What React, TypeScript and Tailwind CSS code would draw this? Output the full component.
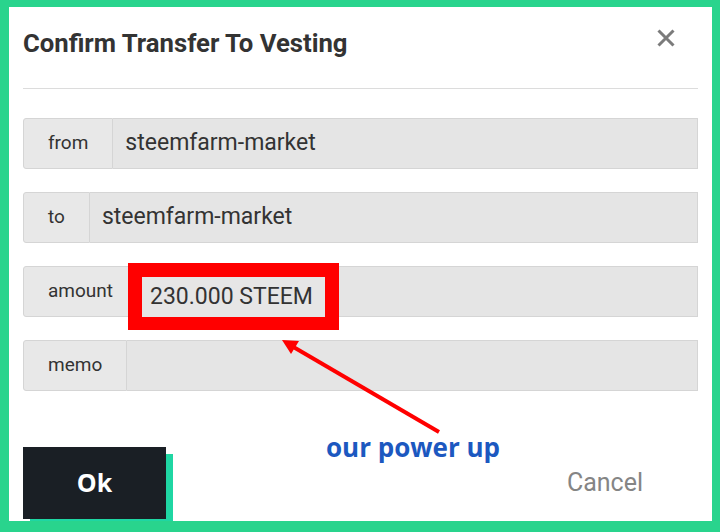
const ROWS = [
  { label: "from", value: "steemfarm-market" },
  { label: "to", value: "steemfarm-market" },
  { label: "amount", value: "230.000 STEEM", marked: true },
  { label: "memo", value: "" },
];

function Field({ label, value, marked }: { label: string; value: string; marked?: boolean }) {
  return (
    <div className="flex h-[51px] text-[#333]">
      <div className="flex items-center px-[24px] bg-[#e8e8e8] border border-[#d5d5d5] rounded-l-[3px] text-[19px]">
        {label}
      </div>
      <div className="relative flex-1 flex items-center bg-[#e5e5e5] border border-l-0 border-[#d5d5d5] text-[23px] pl-[12px]">
        {marked ? (
          <div className="absolute left-[-10px] top-[-4px] w-[211px] h-[67px] border-[14px] border-b-[13px] border-[#ff0000] bg-[#e6e6e6] flex items-center pl-[8px]">
            {value}
          </div>
        ) : (
          value
        )}
      </div>
    </div>
  );
}

export default function App() {
  return (
    <div className="relative w-[720px] h-[532px] bg-[#29d48d] pt-[7px] pl-[9px] pr-[8px] pb-[11px] font-['Roboto',sans-serif]">
      <div className="h-full bg-white flex flex-col px-[14px] overflow-hidden">
        {/* header */}
        <div className="flex justify-between h-[82px] border-b border-[#dcdcdc]">
          <h1 className="mt-[21px] text-[25.7px] font-bold text-[#333] leading-[30px]">Confirm Transfer To Vesting</h1>
          <svg className="mt-[22px] mr-[23px]" width="18" height="18" viewBox="0 0 18 18">
            <path d="M1.5 1.5L16.5 16.5M16.5 1.5L1.5 16.5" stroke="#7b7b7b" strokeWidth="3" />
          </svg>
        </div>

        <div className="flex flex-col gap-[23px] mt-[29px]">
          {ROWS.map((r) => (
            <Field key={r.label} {...r} />
          ))}
        </div>

        {/* buttons */}
        <div className="mt-auto mb-[2px] flex items-center">
          <button className="w-[143px] h-[72px] bg-[#1a1f25] text-white text-[25px] font-bold font-['Open_Sans',sans-serif] shadow-[7px_7px_0_#1fd6a3]">
            Ok
          </button>
          <button className="ml-auto mr-[55px] text-[25px] text-[#858585]">Cancel</button>
        </div>
      </div>

      {/* annotation */}
      <svg className="absolute inset-0 pointer-events-none" width="720" height="532">
        <line x1="439" y1="432" x2="290" y2="345" stroke="#ff0000" strokeWidth="4" />
        <path d="M282 340L299 341L291 354Z" fill="#ff0000" />
      </svg>
      <div className="absolute left-[326px] top-[434px] text-[26px] font-bold text-[#1c58c0] font-['Open_Sans',sans-serif] leading-none">
        our power up
      </div>
    </div>
  );
}
